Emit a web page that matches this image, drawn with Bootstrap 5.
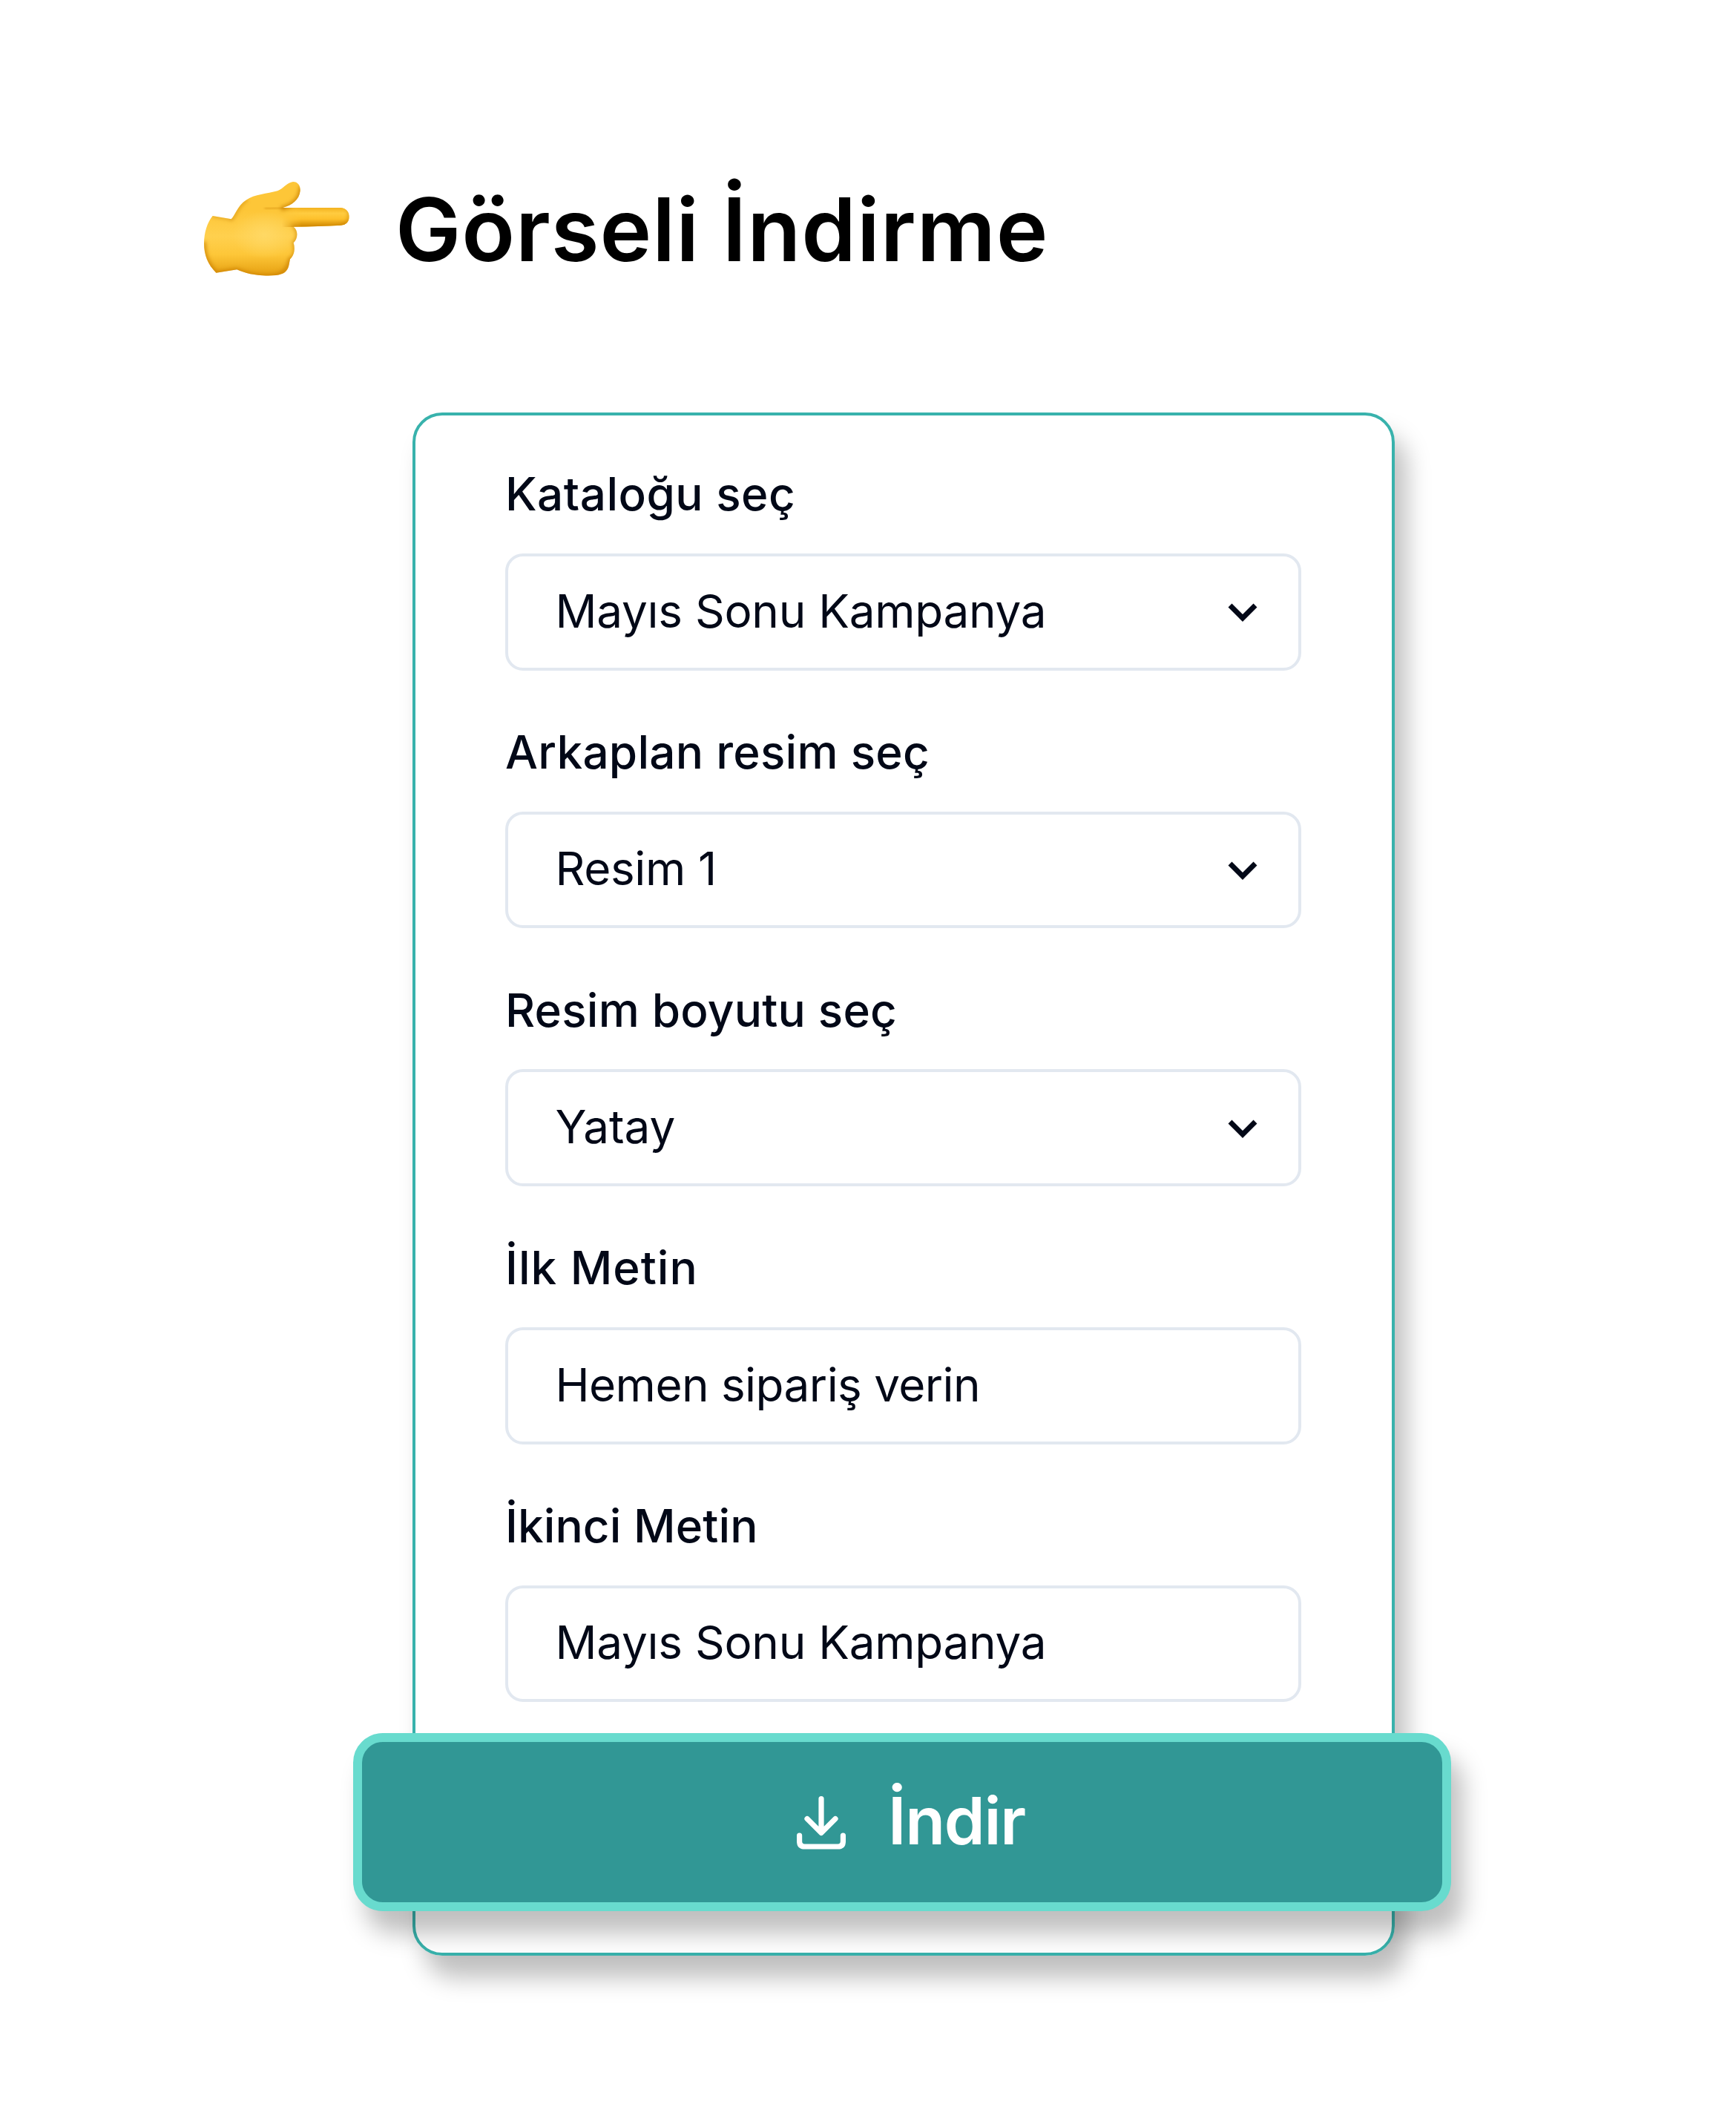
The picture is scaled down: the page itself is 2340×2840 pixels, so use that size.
<!DOCTYPE html>
<html lang="tr">
<head>
<meta charset="utf-8">
<title>Görseli İndirme</title>
<link href="https://cdn.jsdelivr.net/npm/bootstrap@5.3.0/dist/css/bootstrap.min.css" rel="stylesheet">
<style>
body{font-family:Inter,"Liberation Sans",sans-serif;color:#020817;background:#fff;width:2340px;height:2840px;overflow:hidden}
.hero{padding:220px 0 0 250px;height:556px}
.hand{width:250px;height:180px;flex:none}
.hero h1{font-size:118px;font-weight:600;line-height:180px;letter-spacing:.93px;color:#000;margin:-1px 0 0 33px;white-space:nowrap}
.panel{width:1324px;height:2080px;margin-left:556px;border:4px solid #38b2ac;border-radius:40px;padding:61.3px 122px 0 121px;box-shadow:16px 30px 32px rgba(0,0,0,.25)}
.fields{gap:65.3px}
.field-label{font-size:62px;font-weight:500;line-height:90px;margin:0 0 34.7px;display:block;white-space:nowrap}
.field-box{height:157.7px;border:4px solid #e2e8f0;border-radius:24px;font-size:62px;line-height:1.2;padding:0 55px 2px 63.5px;color:#020817;white-space:nowrap}
.chevron{width:40px;height:28px;fill:none;stroke:#020817;stroke-width:7;margin-top:5px}
.download{width:1480px;height:240px;margin:41.3px 0 0 -205px;border:12px solid #68dbce;border-radius:40px;background:#319795;color:#fff;font-size:88px;font-weight:600;line-height:1;box-shadow:16px 30px 32px rgba(0,0,0,.25);padding:0 0 3px 586px;gap:57px;letter-spacing:-1.2px}
.download svg{width:66px;height:76px;fill:none;stroke:#fff;stroke-width:7.2;stroke-linecap:round;stroke-linejoin:round;margin-top:4px}
.ls-a{letter-spacing:.49px}.ls-b{letter-spacing:.27px}.ls-c{letter-spacing:.23px}.ls-d{letter-spacing:1px}.ls-e{letter-spacing:.1px}
.ls-f{letter-spacing:-.26px}.ls-g{letter-spacing:-.35px}.ls-h{letter-spacing:-.55px}.ls-i{letter-spacing:0}
</style>
<script src="https://cdn.jsdelivr.net/npm/bootstrap@5.3.0/dist/js/bootstrap.bundle.min.js"></script>
</head>
<body>
<header class="hero d-flex">
  <svg class="hand" viewBox="0 0 750 540" aria-hidden="true">
    <defs>
      <path id="handShape" d="M110 213L185 226C200 212 210 172 245 149C280 125 330 124 372 112C400 100 408 79 435 75C456 75 465 92 464 112C460 148 432 170 393 180L628 180C650 182 662 198 662 216C662 236 650 250 628 251Q540 256 437 257C456 271 456 304 437 322C444 345 441 372 423 388C418 410 420 425 402 441C384 454 350 455 325 455C282 454 240 445 208 430L124 443C90 410 75 370 75 325C75 280 88 240 110 213Z"/>
      <clipPath id="handClip"><use href="#handShape"/></clipPath>
      <linearGradient id="handFill" gradientUnits="userSpaceOnUse" x1="0" y1="190" x2="0" y2="455">
        <stop offset="0" stop-color="#fdc638"/><stop offset=".4" stop-color="#ffd04e"/><stop offset=".68" stop-color="#fdc638"/><stop offset="1" stop-color="#e59f10"/>
      </linearGradient>
      <linearGradient id="fingerFill" gradientUnits="userSpaceOnUse" x1="0" y1="180" x2="0" y2="256">
        <stop offset="0" stop-color="#f3b21f"/><stop offset=".3" stop-color="#ffcc40"/><stop offset=".6" stop-color="#fdc02b"/><stop offset="1" stop-color="#cf8600"/>
      </linearGradient>
      <linearGradient id="fade" gradientUnits="userSpaceOnUse" x1="390" y1="0" x2="470" y2="0">
        <stop offset="0" stop-color="#000"/><stop offset="1" stop-color="#fff"/>
      </linearGradient>
      <mask id="fingerMask"><rect x="390" y="178" width="290" height="80" fill="url(#fade)"/></mask>
      <radialGradient id="palm"><stop offset="0" stop-color="#ffd864"/><stop offset="1" stop-color="#ffd864" stop-opacity="0"/></radialGradient>
      <filter id="soft" x="-20%" y="-20%" width="140%" height="140%"><feGaussianBlur stdDeviation="8"/></filter>
      <filter id="softer" x="-20%" y="-150%" width="140%" height="400%"><feGaussianBlur stdDeviation="4"/></filter>
    </defs>
    <g clip-path="url(#handClip)">
      <rect width="750" height="540" fill="url(#handFill)"/>
      <ellipse cx="320" cy="290" rx="130" ry="95" fill="url(#palm)"/>
      <rect x="390" y="178" width="290" height="80" fill="url(#fingerFill)" mask="url(#fingerMask)"/>
      <g fill="none" stroke="#c97f00" filter="url(#soft)" stroke-linecap="round">
        <path d="M110 211L186 226" stroke-width="10" opacity=".55"/>
        <path d="M186 226C204 212 210 172 245 149" stroke-width="12" opacity=".5"/>
        <path d="M75 325C75 370 90 410 124 445L208 432C240 447 282 457 325 458C384 457 410 445 424 390" stroke-width="17" opacity=".75"/>
        <path d="M424 388C445 372 446 345 439 322C458 304 458 271 440 257" stroke-width="13" opacity=".7"/>
        <path d="M468 100C464 148 432 172 393 182" stroke-width="18" opacity=".8"/>
        <path d="M660 190C668 215 664 245 628 254" stroke-width="10" opacity=".7"/>
      </g>
      <path d="M320 183L400 181" fill="none" stroke="#c97f00" stroke-width="6" opacity=".6" filter="url(#softer)"/>
    </g>
  </svg>
  <h1>Görseli İndirme</h1>
</header>
<main class="panel">
  <form class="fields d-flex flex-column">
    <div>
      <label class="field-label ls-a">Kataloğu seç</label>
      <div class="field-box d-flex align-items-center justify-content-between"><span class="ls-f">Mayıs Sonu Kampanya</span><svg class="chevron" viewBox="0 0 40 28"><path d="M3 4L20 21L37 4"/></svg></div>
    </div>
    <div>
      <label class="field-label ls-b">Arkaplan resim seç</label>
      <div class="field-box d-flex align-items-center justify-content-between"><span class="ls-g">Resim 1</span><svg class="chevron" viewBox="0 0 40 28"><path d="M3 4L20 21L37 4"/></svg></div>
    </div>
    <div>
      <label class="field-label ls-c">Resim boyutu seç</label>
      <div class="field-box d-flex align-items-center justify-content-between"><span class="ls-i">Yatay</span><svg class="chevron" viewBox="0 0 40 28"><path d="M3 4L20 21L37 4"/></svg></div>
    </div>
    <div>
      <label class="field-label ls-d">İlk Metin</label>
      <div class="field-box d-flex align-items-center"><span class="ls-h">Hemen sipariş verin</span></div>
    </div>
    <div>
      <label class="field-label ls-e">İkinci Metin</label>
      <div class="field-box d-flex align-items-center"><span class="ls-f">Mayıs Sonu Kampanya</span></div>
    </div>
  </form>
  <button type="button" class="download d-flex align-items-center">
    <svg viewBox="0 0 66 76"><path d="M33 6.500V52M14 33.500L33 52.500L52 33.500M3.600 56V64Q3.600 71 10.600 71H55.400Q62.400 71 62.400 64V56"/></svg>
    <span>İndir</span>
  </button>
</main>
</body>
</html>
